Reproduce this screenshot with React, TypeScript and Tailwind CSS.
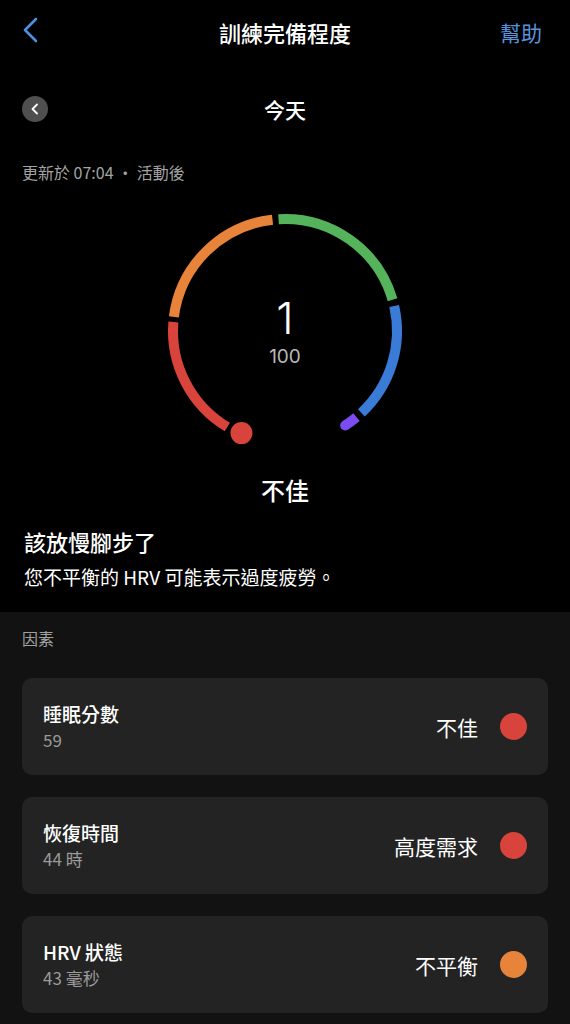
import type { ReactNode } from 'react';

const FONT = '"Noto Sans CJK TC", "Noto Sans", sans-serif';

const CX = 130;
const CY = 130;
const R = 112;

const pt = (deg: number, r = R) => {
  const t = (deg * Math.PI) / 180;
  return [CX + r * Math.sin(t), CY - r * Math.cos(t)];
};

const arc = (a1: number, a2: number) => {
  const [x1, y1] = pt(a1);
  const [x2, y2] = pt(a2);
  const large = a2 - a1 > 180 ? 1 : 0;
  return `M ${x1} ${y1} A ${R} ${R} 0 ${large} 1 ${x2} ${y2}`;
};

const segments = [
  { from: -149, to: -85.4, color: '#d8443b' },
  { from: -82.8, to: -6.4, color: '#e8843a' },
  { from: -3.3, to: 73.8, color: '#55b45b' },
  { from: 77.1, to: 137, color: '#3b7bd8' },
];

const Gauge = () => {
  const [px, py] = pt(147.5);
  const [dx, dy] = pt(-156.9, 111);
  return (
    <div className="relative w-[260px] h-[260px]">
      <svg width="260" height="260" viewBox="0 0 260 260">
        {segments.map((s) => (
          <path key={s.color} d={arc(s.from, s.to)} stroke={s.color} strokeWidth="10" fill="none" />
        ))}
        <path d={arc(140.3, 147.5)} stroke="#7a4cf2" strokeWidth="10" fill="none" />
        <circle cx={px} cy={py} r="5" fill="#7a4cf2" />
        <circle cx={dx} cy={dy} r="11" fill="#d8443b" />
      </svg>
      {/* value overlay */}
      <div className="absolute inset-0 flex flex-col items-center pt-[95px]">
        <div className="text-[44px] leading-[44px] font-light text-white" style={{ fontFamily: 'Inter, sans-serif' }}>
          1
        </div>
        <div className="text-[19px] leading-[24px] text-[#b8b8b8] mt-[5px]" style={{ fontFamily: 'Inter, sans-serif' }}>
          100
        </div>
      </div>
    </div>
  );
};

interface FactorProps {
  title: ReactNode;
  sub: string;
  status: string;
  dot: string;
}

const Factor = ({ title, sub, status, dot }: FactorProps) => (
  <div className="h-[97px] rounded-[10px] bg-[#232323] pl-[21px] pr-[21px] flex items-center justify-between">
    <div className="flex flex-col gap-[3px]">
      <div className="text-[19px] leading-[24px] font-medium text-white">{title}</div>
      <div className="text-[17px] leading-[22px] text-[#9a9a9a]">{sub}</div>
    </div>
    <div className="flex items-center gap-[22px]">
      <span className="text-[21px] leading-[28px] text-white">{status}</span>
      <span className="w-[27px] h-[27px] rounded-full" style={{ backgroundColor: dot }} />
    </div>
  </div>
);

export default function App() {
  return (
    <div className="w-[570px] min-h-[1024px] bg-black flex flex-col" style={{ fontFamily: FONT }}>
      <header className="h-[64px] relative flex items-center justify-center">
        <svg className="absolute left-[22px] top-[17px]" width="18" height="26" viewBox="0 0 18 26">
          <polyline points="14,2 3,13 14,24" stroke="#4d8fe0" strokeWidth="2.6" fill="none" strokeLinecap="round" strokeLinejoin="round" />
        </svg>
        <h1 className="text-[22px] leading-[30px] font-medium text-white">訓練完備程度</h1>
        <span className="absolute right-[28px] top-[17px] text-[21px] leading-[30px] text-[#5a93dc]">幫助</span>
      </header>

      <div className="h-[90px] relative flex items-center justify-center">
        <div className="absolute left-[22px] w-[26px] h-[26px] rounded-full bg-[#4f4f4f] flex items-center justify-center">
          <svg width="10" height="12" viewBox="0 0 10 12">
            <polyline points="7,1.5 2.5,6 7,10.5" stroke="#ffffff" strokeWidth="1.8" fill="none" strokeLinecap="round" strokeLinejoin="round" />
          </svg>
        </div>
        <span className="text-[21px] leading-[30px] font-medium text-white">今天</span>
      </div>

      <div className="h-[36px] flex items-center px-[22px]">
        <span className="text-[16px] leading-[22px] text-[#a3a3a3]">更新於 07:04 • 活動後</span>
      </div>

      <div className="flex justify-center pt-[11px]">
        <Gauge />
      </div>

      <div className="h-[58px] flex items-center justify-center">
        <span className="text-[24px] leading-[32px] font-medium text-white">不佳</span>
      </div>

      <div className="px-[24px] pt-[7px] pb-[22px]">
        <h2 className="text-[22px] leading-[30px] font-medium text-white">該放慢腳步了</h2>
        <p className="mt-[8px] text-[19px] leading-[26px] text-white">您不平衡的 HRV 可能表示過度疲勞。</p>
      </div>

      <section className="flex-1 bg-[#121212] px-[22px] pt-[16px] pb-[12px]">
        <div className="text-[16px] leading-[20px] text-[#a0a0a0]">因素</div>
        <div className="mt-[30px] flex flex-col gap-[22px]">
          <Factor title="睡眠分數" sub="59" status="不佳" dot="#d8443b" />
          <Factor title="恢復時間" sub="44 時" status="高度需求" dot="#d8443b" />
          <Factor title="HRV 狀態" sub="43 毫秒" status="不平衡" dot="#e8833a" />
        </div>
      </section>
    </div>
  );
}
